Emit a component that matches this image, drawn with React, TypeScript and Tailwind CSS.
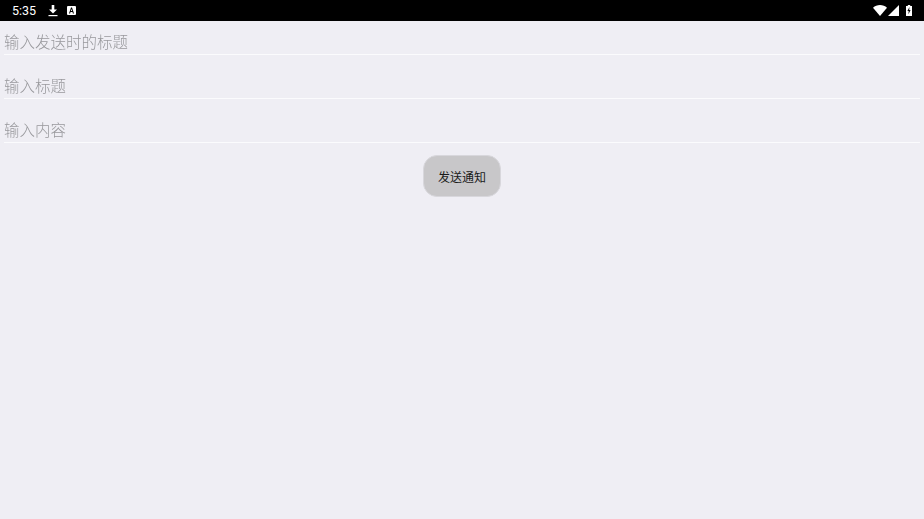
const cjk = "font-['Roboto','Noto_Sans_CJK_SC',sans-serif]";

function StatusBar() {
  return (
    <div className="flex h-[21px] items-center justify-between bg-black pl-3 pr-[12px] text-white">
      <div className="flex items-center">
        <span className="pt-px font-['Roboto',sans-serif] text-[12.5px] leading-none">5:35</span>
        {/* download arrow */}
        <svg className="ml-[12px]" width="10" height="12" viewBox="0 0 10 12" fill="white">
          <path d="M3.7 0h2.6v4.5H9L5 8.5 1 4.5h2.7z" />
          <rect x="0.5" y="10" width="9" height="1.2" />
        </svg>
        {/* keyboard badge */}
        <svg className="ml-[9px]" width="9" height="9" viewBox="0 0 9 9">
          <rect width="9" height="9" rx="1" fill="white" />
          <path d="M2 7.4 4 1.6h1l2 5.8H5.9L5.5 6H3.5l-.4 1.4zM3.8 5h1.4L4.5 2.9z" fill="black" />
        </svg>
      </div>
      <div className="flex items-center">
        {/* wifi */}
        <svg width="14" height="11" viewBox="0 0 14 11" fill="white">
          <path d="M0 2.8C1.9 1 4.3 0 7 0s5.1 1 7 2.8L7 11z" />
        </svg>
        {/* cellular */}
        <svg className="ml-[1px]" width="11" height="11" viewBox="0 0 11 11" fill="white">
          <path d="M11 0v11H0z" />
        </svg>
        {/* battery charging */}
        <svg className="ml-[7px]" width="6" height="11" viewBox="0 0 6 11">
          <path d="M1.8 0h2.4v1H6V11H0V1h1.8z" fill="white" />
          <path d="M3.5 2 1.4 6h1.3l-.3 3.2 2.2-4.1H3.2z" fill="black" />
        </svg>
      </div>
    </div>
  );
}

function Field({ label }: { label: string }) {
  return (
    <div className="mt-[10px] h-[34px] border-b border-[#fbfbfd] first:mt-0">
      <div className={`${cjk} h-[33px] pt-[10.5px] text-[15.5px] font-light leading-[22px] text-[#98989c] [will-change:transform] -ml-[0.5px]`}>{label}</div>
    </div>
  );
}

export default function App() {
  return (
    <div className="flex h-[519px] w-[924px] flex-col overflow-hidden bg-[#efeef4]">
      <StatusBar />
      <div className="flex flex-col px-1">
        <Field label="输入发送时的标题" />
        <Field label="输入标题" />
        <Field label="输入内容" />
      </div>
      <div className="mt-3 flex justify-center">
        <button
          className={`${cjk} h-[42px] w-[78px] rounded-[14px] border border-[#d8d7dc] bg-[#c8c7c9] pt-1 text-[12px] text-[#1a1a1a]`}
        >
          发送通知
        </button>
      </div>
    </div>
  );
}
